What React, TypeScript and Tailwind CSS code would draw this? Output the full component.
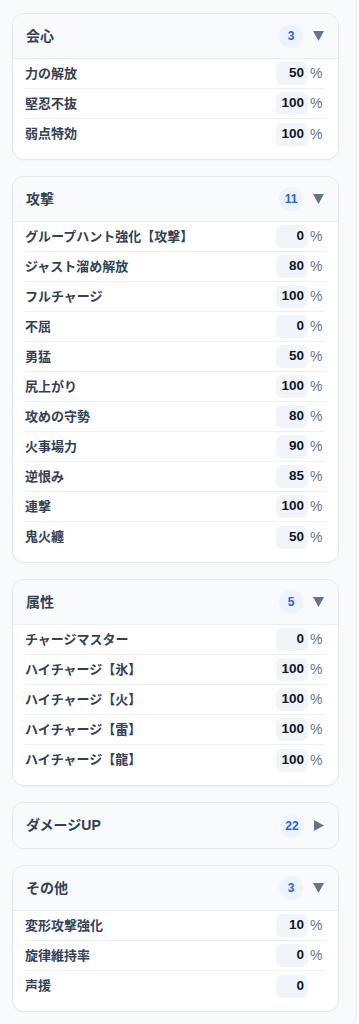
import React from "react";

type Item = { name: string; value: number; unit?: string };
type Group = { title: string; count: number; open: boolean; items: Item[] };

const groups: Group[] = [
  {
    title: "会心",
    count: 3,
    open: true,
    items: [
      { name: "力の解放", value: 50, unit: "%" },
      { name: "堅忍不抜", value: 100, unit: "%" },
      { name: "弱点特効", value: 100, unit: "%" },
    ],
  },
  {
    title: "攻撃",
    count: 11,
    open: true,
    items: [
      { name: "グループハント強化【攻撃】", value: 0, unit: "%" },
      { name: "ジャスト溜め解放", value: 80, unit: "%" },
      { name: "フルチャージ", value: 100, unit: "%" },
      { name: "不屈", value: 0, unit: "%" },
      { name: "勇猛", value: 50, unit: "%" },
      { name: "尻上がり", value: 100, unit: "%" },
      { name: "攻めの守勢", value: 80, unit: "%" },
      { name: "火事場力", value: 90, unit: "%" },
      { name: "逆恨み", value: 85, unit: "%" },
      { name: "連撃", value: 100, unit: "%" },
      { name: "鬼火纏", value: 50, unit: "%" },
    ],
  },
  {
    title: "属性",
    count: 5,
    open: true,
    items: [
      { name: "チャージマスター", value: 0, unit: "%" },
      { name: "ハイチャージ【氷】", value: 100, unit: "%" },
      { name: "ハイチャージ【火】", value: 100, unit: "%" },
      { name: "ハイチャージ【雷】", value: 100, unit: "%" },
      { name: "ハイチャージ【龍】", value: 100, unit: "%" },
    ],
  },
  { title: "ダメージUP", count: 22, open: false, items: [] },
  {
    title: "その他",
    count: 3,
    open: true,
    items: [
      { name: "変形攻撃強化", value: 10, unit: "%" },
      { name: "旋律維持率", value: 0, unit: "%" },
      { name: "声援", value: 0 },
    ],
  },
];

function Caret({ open }: { open: boolean }) {
  return open ? (
    <svg width="11" height="10" viewBox="0 0 11 10">
      <polygon points="0,0 11,0 5.5,10" fill="#64748b" />
    </svg>
  ) : (
    <svg width="10" height="11" viewBox="0 0 10 11">
      <polygon points="0,0 10,5.5 0,11" fill="#64748b" />
    </svg>
  );
}

function GroupCard({ group }: { group: Group }) {
  return (
    <div className="mb-4 overflow-hidden rounded-xl border border-[#e2e8f0] bg-white shadow-[0_1px_2px_rgba(15,23,42,0.03)]">
      <div
        className={`flex h-[45px] items-center justify-between bg-[#f8fafc] px-3 ${
          group.open ? "border-b border-[#e9eef4]" : ""
        }`}
      >
        <span className="pl-px text-[14px] font-bold text-[#334155]">{group.title}</span>
        <div className="flex items-center gap-[10px] pr-0.5">
          <span className="flex h-6 w-6 items-center justify-center rounded-full bg-[#eef4ff] text-[12px] font-semibold text-[#2563eb]">
            {group.count}
          </span>
          <Caret open={group.open} />
        </div>
      </div>
      {group.open && (
        <div className="px-3 pb-[10px]">
          {group.items.map((it, i) => (
            <div
              key={it.name}
              className={`flex h-[30px] items-center justify-between ${
                i < group.items.length - 1 ? "border-b border-[#eef2f6]" : ""
              }`}
            >
              <span className="text-[13px] font-semibold text-[#334155]">{it.name}</span>
              <div className="flex items-center">
                <span className="flex h-[23px] w-[32px] items-center justify-end rounded-md bg-[#f1f5f9] pr-1 text-[13.5px] font-bold text-[#0f172a]">
                  {it.value}
                </span>
                <span className="w-[18px] pl-[2px] text-[14px] text-[#64748b]">{it.unit ?? ""}</span>
              </div>
            </div>
          ))}
        </div>
      )}
    </div>
  );
}

export default function App() {
  return (
    <div
      className="min-h-[1024px] bg-white"
      style={{ fontFamily: '"Liberation Sans", "Noto Sans CJK JP", sans-serif' }}
    >
      <div className="w-[357px] rounded-br-2xl border-r border-b border-[#e2e8f0] bg-[#f8fafc] pt-[13px] pl-3 pr-[17px] pb-[2px]">
        {groups.map((g) => (
          <GroupCard key={g.title} group={g} />
        ))}
      </div>
    </div>
  );
}
